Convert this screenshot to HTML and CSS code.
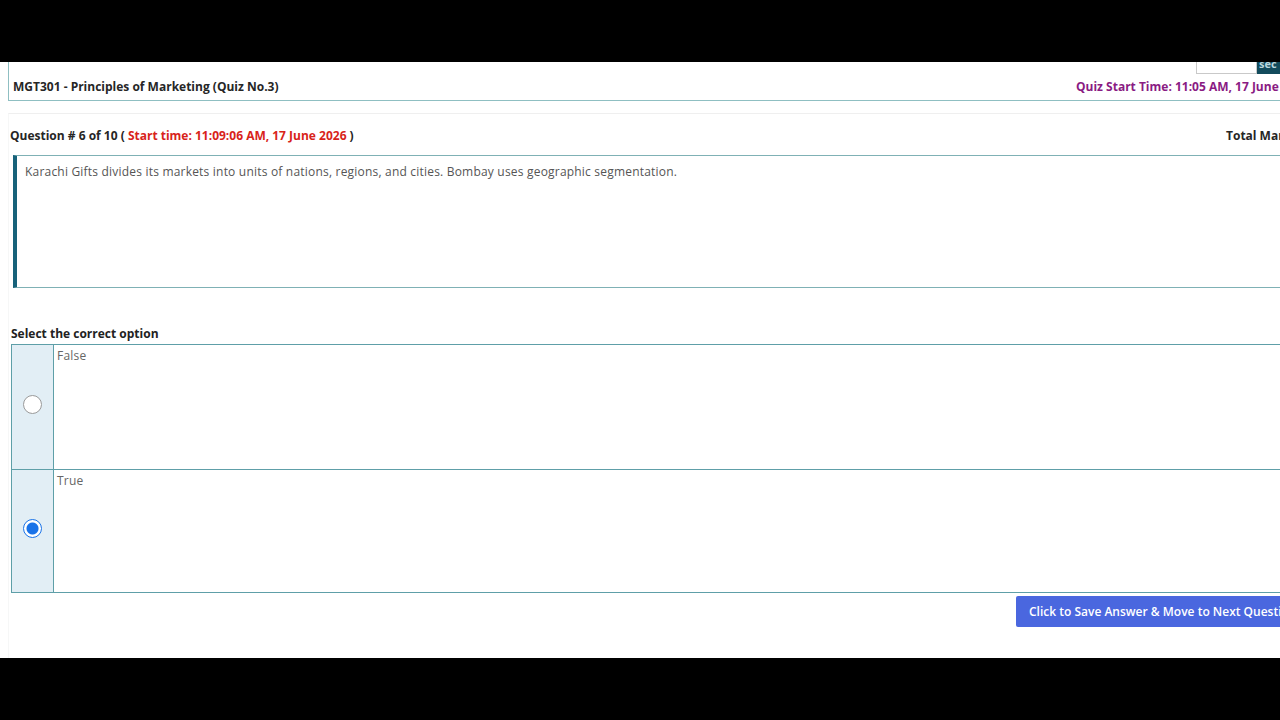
FILE: index.html
```html
<!DOCTYPE html>
<html lang="en">
<head>
<meta charset="utf-8">
<title>MGT301 Quiz</title>
<link rel="stylesheet" href="styles.css">
</head>
<body>
<div class="viewport">
  <div class="bar"></div>
  <main class="page">
    <header class="quiz-header">
      <div class="tools">
        <span class="search-input"></span>
        <span class="search-btn">sec</span>
      </div>
      <div class="title-row">
        <h1 class="course-title">MGT301 - Principles of Marketing (Quiz No.3)</h1>
        <span class="quiz-start">Quiz Start Time: 11:05 AM, 17 June 2026</span>
      </div>
    </header>

    <section class="question">
      <div class="question-head">
        <span class="q-num">Question # 6 of 10 ( <span class="q-time">Start time: 11:09:06 AM, 17 June 2026</span> )</span>
        <span class="total-marks">Total Marks: 1</span>
      </div>
      <div class="question-box">
        <p>Karachi Gifts divides its markets into units of nations, regions, and cities. Bombay uses geographic segmentation.</p>
      </div>

      <h2 class="select-label">Select the correct option</h2>
      <div class="options">
        <label class="option">
          <span class="option-radio"><span class="radio"></span></span>
          <span class="option-text">False</span>
        </label>
        <label class="option">
          <span class="option-radio"><span class="radio checked"></span></span>
          <span class="option-text">True</span>
        </label>
      </div>

      <div class="actions">
        <button class="save-btn">Click to Save Answer &amp; Move to Next Question</button>
      </div>
    </section>
  </main>
  <div class="bar"></div>
</div>
</body>
</html>
```

FILE: styles.css
```css
* { box-sizing: border-box; }
html, body { margin: 0; padding: 0; background: #000; }
body { font-family: "Open Sans", "Liberation Sans", sans-serif; }

.viewport {
  width: 1280px;
  height: 720px;
  overflow: hidden;
  display: flex;
  flex-direction: column;
}
.bar { height: 62px; background: #000; flex-shrink: 0; }

.page {
  height: 596px;
  background: #fff;
  width: 1280px;
  overflow: hidden;
  flex-shrink: 0;
}
.page > * { width: 1500px; }

.quiz-header {
  border: 1px solid #8fbfc2;
  border-top: none;
  height: 39px;
  margin-left: 8px;
}
.tools {
  height: 11px;
  display: flex;
  padding-left: 1187px;
}
.search-input {
  width: 61px;
  height: 12px;
  border: 1px solid #c9c9c9;
  border-top: none;
  background: #fff;
}
.search-btn {
  width: 40px;
  height: 12px;
  background: #124b5c;
  color: #b9d6de;
  font-size: 11px;
  font-weight: 700;
  line-height: 4px;
  padding-left: 2px;
  overflow: hidden;
}
.title-row {
  height: 26px;
  display: grid;
  grid-template-columns: 1063px auto;
  align-items: center;
  padding-left: 4px;
}
.course-title {
  margin: 0;
  font-size: 12px;
  font-weight: 700;
  color: #262626;
  white-space: nowrap;
}
.quiz-start {
  font-size: 12px;
  font-weight: 700;
  color: #8a1b83;
  white-space: nowrap;
}

.question {
  margin-top: 12px;
  margin-left: 8px;
  border-top: 1px solid #efefef;
  border-left: 1px solid #f6f7f7;
  height: 560px;
}
.question-head {
  height: 41px;
  display: grid;
  grid-template-columns: 1216px auto;
  align-items: center;
  padding-left: 1px;
  padding-top: 1px;
}
.q-num, .total-marks {
  font-size: 12px;
  font-weight: 700;
  color: #262626;
  white-space: nowrap;
}
.q-time { color: #d8231a; }

.question-box {
  margin-left: 4px;
  height: 133px;
  border: 1px solid #7fb1b5;
  border-left: 4px solid #17627a;
  padding: 8px 8px;
}
.question-box p {
  margin: 0;
  font-size: 12px;
  letter-spacing: 0.2px;
  color: #555;
  line-height: 16px;
}

.select-label {
  margin: 38px 0 2px 2px;
  font-size: 12px;
  font-weight: 700;
  color: #222;
  line-height: 16px;
}

.options {
  margin-left: 2px;
  border: 1px solid #5e9fa8;
}
.option {
  display: flex;
  height: 124px;
}
.option + .option { border-top: 1px solid #5e9fa8; height: 123px; }
.option-radio {
  width: 42px;
  background: #e2eef5;
  border-right: 1px solid #5e9fa8;
  display: flex;
  align-items: center;
  justify-content: center;
  padding-bottom: 6px;
  flex-shrink: 0;
}
.radio {
  width: 19px;
  height: 19px;
  border-radius: 50%;
  border: 1px solid #9a9a9a;
  background: #fff;
}
.radio.checked {
  border: 1px solid #1a73e8;
  background: radial-gradient(circle, #1a73e8 0 5.5px, #fff 6.5px);
}
.option-text {
  padding: 3px 3px;
  font-size: 12px;
  letter-spacing: 0.2px;
  color: #666;
  line-height: 16px;
}

.actions {
  padding-left: 1007px;
  padding-top: 3px;
}
.save-btn {
  height: 31px;
  border: none;
  border-radius: 2px;
  background: #4a67df;
  color: #fff;
  font-family: inherit;
  font-size: 12px;
  font-weight: 600;
  padding: 0 13px;
  white-space: nowrap;
}
```
